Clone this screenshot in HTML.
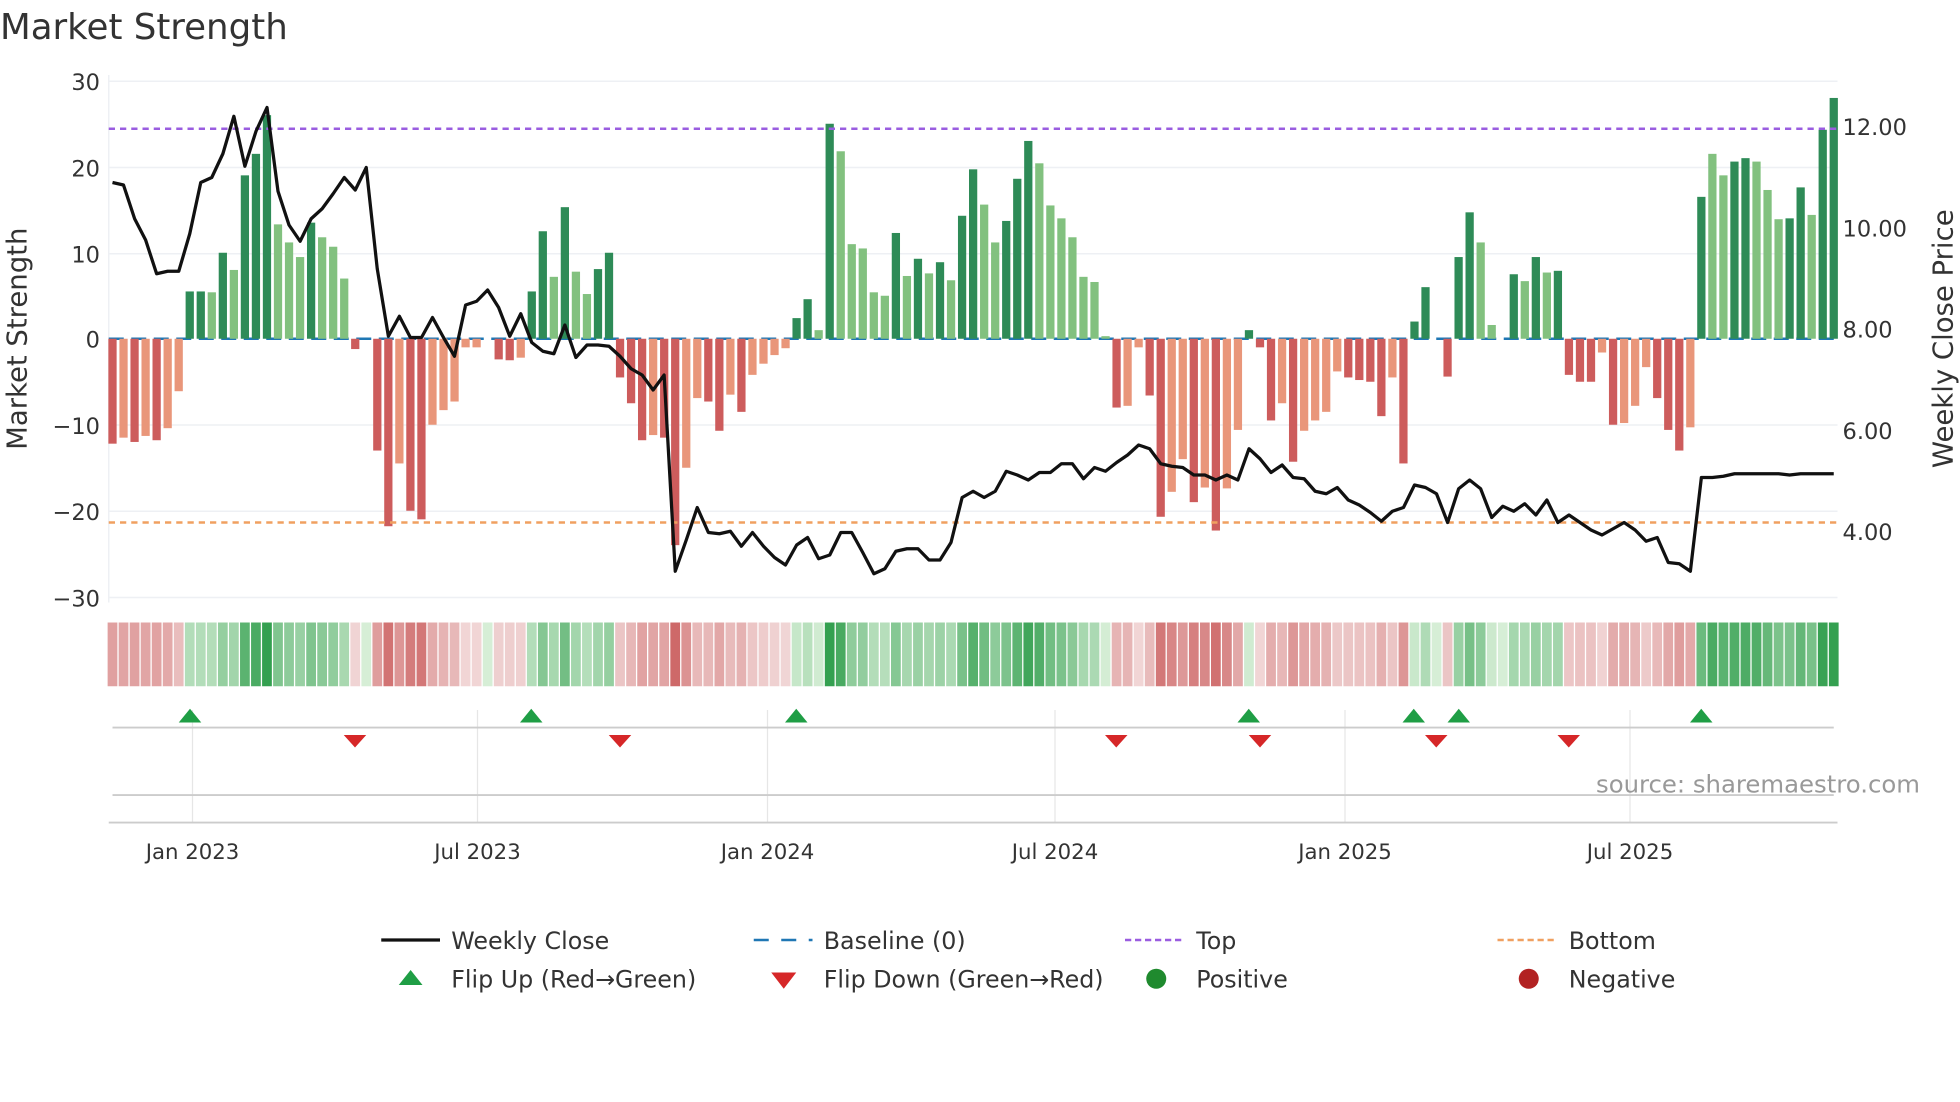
<!DOCTYPE html>
<html><head><meta charset="utf-8"><style>
html,body{margin:0;padding:0;background:#fff;}
svg{display:block;font-family:"DejaVu Sans","Liberation Sans",sans-serif;}
</style></head><body>
<svg id="s" width="1960" height="1102" viewBox="0 0 1568 881.6" xmlns="http://www.w3.org/2000/svg">
<rect width="1568" height="882" fill="#fff"/>
<text x="0" y="31" font-size="28.5" fill="#333">Market Strength</text>
<g id="grid" stroke="#eef0f4" stroke-width="1.2">
<line x1="87" x2="1470" y1="65" y2="65"/><line x1="87" x2="1470" y1="134" y2="134"/>
<line x1="87" x2="1470" y1="203" y2="203"/><line x1="87" x2="1470" y1="340" y2="340"/>
<line x1="87" x2="1470" y1="409" y2="409"/><line x1="87" x2="1470" y1="478" y2="478"/>
<line x1="87" x2="87" y1="60" y2="482"/>
</g>
<g font-size="18" fill="#333" text-anchor="end">
<text x="80" y="72">30</text><text x="80" y="141">20</text><text x="80" y="210">10</text>
<text x="80" y="278">0</text><text x="80" y="347">−10</text><text x="80" y="416">−20</text><text x="80" y="485">−30</text>
</g>
<g font-size="18" fill="#333">
<text x="1474" y="108">12.00</text><text x="1474" y="189">10.00</text><text x="1474" y="270">8.00</text>
<text x="1474" y="351">6.00</text><text x="1474" y="432">4.00</text>
</g>
<text transform="translate(21,271) rotate(-90)" font-size="22" fill="#333" text-anchor="middle">Market Strength</text>
<text transform="translate(1562,271) rotate(-90)" font-size="22" fill="#333" text-anchor="middle">Weekly Close Price</text>
<line x1="87" x2="1470" y1="271" y2="271" stroke="#1f77b4" stroke-width="2" stroke-dasharray="12,6"/>
<g id="bars"></g>
<line x1="87" x2="1470" y1="103" y2="103" stroke="#9a5de0" stroke-width="2" stroke-dasharray="5,4"/>
<line x1="87" x2="1470" y1="418" y2="418" stroke="#f0a060" stroke-width="2" stroke-dasharray="5,4"/>
<polyline id="price" fill="none" stroke="#111" stroke-width="2.6" stroke-linejoin="round"/>
<g id="heat"></g>
<g stroke="#e6e6e6" stroke-width="1">
<line x1="154" x2="154" y1="568" y2="658"/><line x1="382" x2="382" y1="568" y2="658"/>
<line x1="614" x2="614" y1="568" y2="658"/><line x1="844" x2="844" y1="568" y2="658"/>
<line x1="1076" x2="1076" y1="568" y2="658"/><line x1="1304" x2="1304" y1="568" y2="658"/>
</g>
<line x1="90" x2="1467" y1="582" y2="582" stroke="#ccc" stroke-width="1.5"/>
<line x1="90" x2="1467" y1="636" y2="636" stroke="#ccc" stroke-width="1.5"/>
<line x1="87" x2="1470" y1="658" y2="658" stroke="#ccc" stroke-width="1.5"/>
<g id="marks"></g>
<text x="1536" y="634" font-size="19.5" fill="#999" text-anchor="end">source: sharemaestro.com</text>
<g font-size="17" fill="#333" text-anchor="middle">
<text x="154" y="687">Jan 2023</text><text x="382" y="687">Jul 2023</text><text x="614" y="687">Jan 2024</text>
<text x="844" y="687">Jul 2024</text><text x="1076" y="687">Jan 2025</text><text x="1304" y="687">Jul 2025</text>
</g>
<g font-size="19" fill="#333">
<line x1="305" x2="352" y1="752" y2="752" stroke="#111" stroke-width="2.6"/><text x="361" y="759">Weekly Close</text>
<line x1="603" x2="650" y1="752" y2="752" stroke="#1f77b4" stroke-width="2" stroke-dasharray="12,10"/><text x="659" y="759">Baseline (0)</text>
<line x1="900" x2="947" y1="752" y2="752" stroke="#9a5de0" stroke-width="2" stroke-dasharray="5,3"/><text x="957" y="759">Top</text>
<line x1="1198" x2="1245" y1="752" y2="752" stroke="#f0a060" stroke-width="2" stroke-dasharray="5,3"/><text x="1255" y="759">Bottom</text>
<polygon points="319,788 338,788 328.5,776" fill="#1f9e45"/><text x="361" y="790">Flip Up (Red→Green)</text>
<polygon points="617,778 637,778 627,791" fill="#d62728"/><text x="659" y="790">Flip Down (Green→Red)</text>
<circle cx="925" cy="783" r="8" fill="#1f8a2e"/><text x="957" y="790">Positive</text>
<circle cx="1223" cy="783" r="8" fill="#b22222"/><text x="1255" y="790">Negative</text>
</g>
</svg>
<script>
var v=[[-12.2,1],[-11.5,0],[-12,1],[-11.3,0],[-11.8,1],[-10.4,0],[-6.1,0],[5.5,1],[5.5,1],[5.4,0],[10,1],[8,0],[19,1],[21.5,1],[26,1],[13.3,0],[11.2,0],[9.5,0],[13.5,1],[11.8,0],[10.7,0],[7,0],[-1.2,1],[0,0],[-13,1],[-21.8,1],[-14.5,0],[-20,1],[-21,1],[-10,0],[-8.3,0],[-7.3,0],[-1,0],[-1,0],[0,0],[-2.4,1],[-2.5,1],[-2.2,0],[5.5,1],[12.5,1],[7.2,0],[15.3,1],[7.8,0],[5.2,0],[8.1,1],[10,1],[-4.5,1],[-7.5,1],[-11.8,1],[-11.2,0],[-11.5,1],[-24,1],[-15,0],[-6.9,0],[-7.3,1],[-10.7,1],[-6.5,0],[-8.5,1],[-4.2,0],[-2.9,0],[-1.9,0],[-1.1,0],[2.4,1],[4.6,1],[1,0],[25,1],[21.8,0],[11,0],[10.5,0],[5.4,0],[5,0],[12.3,1],[7.3,0],[9.3,1],[7.6,0],[8.9,1],[6.8,0],[14.3,1],[19.7,1],[15.6,0],[11.2,0],[13.7,1],[18.6,1],[23,1],[20.4,0],[15.5,0],[14,0],[11.8,0],[7.2,0],[6.6,0],[0.3,0],[-8,1],[-7.8,0],[-1,0],[-6.6,1],[-20.7,1],[-17.8,0],[-14,0],[-19,1],[-17.3,0],[-22.3,1],[-17.4,0],[-10.6,0],[1,1],[-1,1],[-9.5,1],[-7.5,0],[-14.3,1],[-10.7,0],[-9.5,0],[-8.5,0],[-3.8,0],[-4.5,1],[-4.8,1],[-5,1],[-9,1],[-4.5,0],[-14.5,1],[2,1],[6,1],[0,0],[-4.4,1],[9.5,1],[14.7,1],[11.2,0],[1.6,0],[0,0],[7.5,1],[6.7,0],[9.5,1],[7.7,0],[7.9,1],[-4.2,1],[-5,1],[-5,1],[-1.6,0],[-10,1],[-9.8,0],[-7.8,0],[-3.3,0],[-6.9,1],[-10.6,1],[-13,1],[-10.3,0],[16.5,1],[21.5,0],[19,0],[20.6,1],[21,1],[20.6,0],[17.3,0],[13.9,0],[14,1],[17.6,1],[14.4,0],[24.3,1],[28,1]];
var py=[146,148,175,192,219,217,217,187,146,142,123,93,133,105,86,153,180,193,175,167,155,142,152,134,215,269,253,270,270,254,270,285,244,241,232,246,269,251,274,281,283,260,286,276,276,277,285,295,300,312,300,457,432,406,426,427,425,437,426,437,446,452,436,430,447,444,426,426,442,459,455,441,439,439,448,448,434,398,393,398,393,377,380,384,378,378,371,371,383,374,377,370,364,356,359,371,373,374,380,380,384,380,384,359,367,378,372,382,383,393,395,390,400,404,410,417,409,406,388,390,395,418,391,384,391,414,405,409,403,412,400,418,412,418,424,428,423,418,424,433,430,450,451,457,382,382,381,379,379,379,379,379,380,379,379,379,379];
var ns="http://www.w3.org/2000/svg",n=v.length,x0=90,dx=(1467-90)/(n-1),k=6.88;
function el(t,a,p){var e=document.createElementNS(ns,t);for(var q in a)e.setAttribute(q,a[q]);document.getElementById(p).appendChild(e);return e;}
function mix(a,b,t){return "rgb("+[0,1,2].map(function(i){return Math.round(a[i]+(b[i]-a[i])*t)}).join(",")+")";}
var pts=[];
for(var i=0;i<n;i++){var x=x0+i*dx,val=v[i][0],d=v[i][1];
 if(val!=0){var h=Math.abs(val)*k,y=val>0?271-h:271;
  var c=val>0?(d?"#2e8b57":"#82c17f"):(d?"#cd5c5c":"#e9967a");
  el("rect",{x:x-3.3,y:y,width:6.6,height:h,fill:c},"bars");}
 var t=Math.min(Math.abs(val)/25,1);
 var hc=val>=0?mix([214,238,214],[52,160,80],t):mix([242,218,218],[205,100,100],t);
 el("rect",{x:x-3.9,y:498,width:7.8,height:51,fill:hc},"heat");
 pts.push(x.toFixed(1)+","+py[i]);}
document.getElementById("price").setAttribute("points",pts.join(" "));
[152,425,637,999,1131,1167,1361].forEach(function(x){el("polygon",{points:(x-9)+",578 "+(x+9)+",578 "+x+",567",fill:"#1f9e45"},"marks");});
[284,496,893,1008,1149,1255].forEach(function(x){el("polygon",{points:(x-9)+",588 "+(x+9)+",588 "+x+",598",fill:"#d62728"},"marks");});
</script>
</body></html>
